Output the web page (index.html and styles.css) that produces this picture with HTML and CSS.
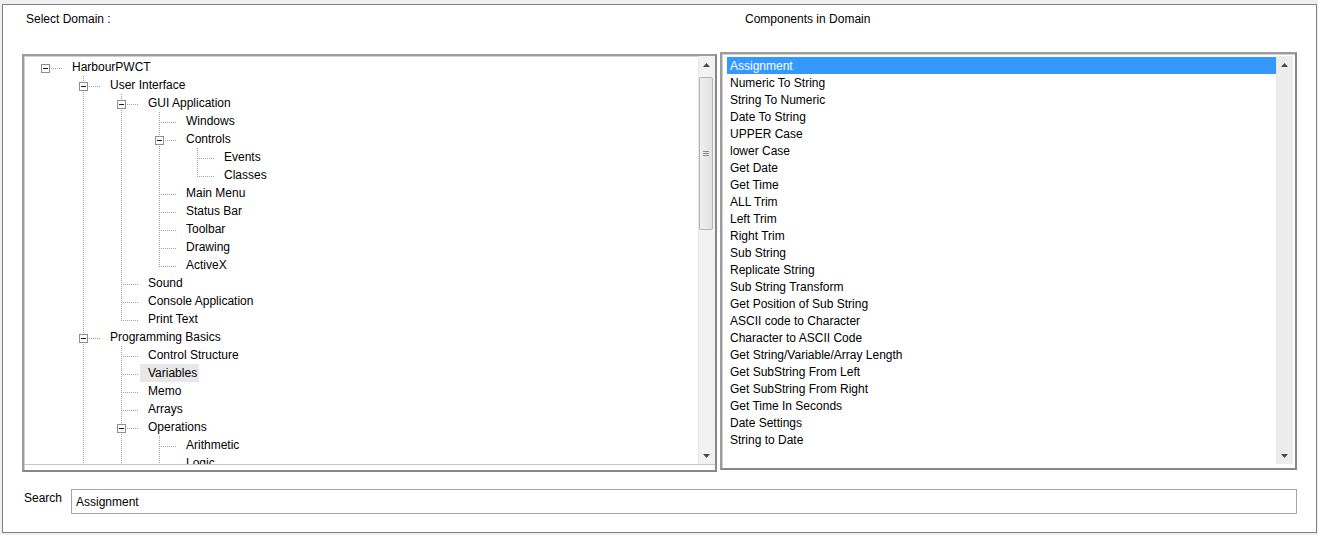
FILE: index.html
```html
<!DOCTYPE html>
<html>
<head>
<meta charset="utf-8">
<link rel="stylesheet" href="styles.css">
</head>
<body>
<div class="frame">
  <div class="header">
    <div class="hl">Select Domain :</div>
    <div class="hr">Components in Domain</div>
  </div>
  <div class="panels">
    <div class="panel left">
      <div class="tree-box">
        <div class="tree">
          <div class="row"><span class="c"><span class="x"></span></span><span class="l">HarbourPWCT</span></div>
          <div class="row"><span class="g"></span><span class="c t b"><span class="x"></span></span><span class="l">User Interface</span></div>
          <div class="row"><span class="g"></span><span class="g v"></span><span class="c t b"><span class="x"></span></span><span class="l">GUI Application</span></div>
          <div class="row"><span class="g"></span><span class="g v"></span><span class="g v"></span><span class="c t b"></span><span class="l">Windows</span></div>
          <div class="row"><span class="g"></span><span class="g v"></span><span class="g v"></span><span class="c t b"><span class="x"></span></span><span class="l">Controls</span></div>
          <div class="row"><span class="g"></span><span class="g v"></span><span class="g v"></span><span class="g v"></span><span class="c t b"></span><span class="l">Events</span></div>
          <div class="row"><span class="g"></span><span class="g v"></span><span class="g v"></span><span class="g v"></span><span class="c t"></span><span class="l">Classes</span></div>
          <div class="row"><span class="g"></span><span class="g v"></span><span class="g v"></span><span class="c t b"></span><span class="l">Main Menu</span></div>
          <div class="row"><span class="g"></span><span class="g v"></span><span class="g v"></span><span class="c t b"></span><span class="l">Status Bar</span></div>
          <div class="row"><span class="g"></span><span class="g v"></span><span class="g v"></span><span class="c t b"></span><span class="l">Toolbar</span></div>
          <div class="row"><span class="g"></span><span class="g v"></span><span class="g v"></span><span class="c t b"></span><span class="l">Drawing</span></div>
          <div class="row"><span class="g"></span><span class="g v"></span><span class="g v"></span><span class="c t"></span><span class="l">ActiveX</span></div>
          <div class="row"><span class="g"></span><span class="g v"></span><span class="c t b"></span><span class="l">Sound</span></div>
          <div class="row"><span class="g"></span><span class="g v"></span><span class="c t b"></span><span class="l">Console Application</span></div>
          <div class="row"><span class="g"></span><span class="g v"></span><span class="c t"></span><span class="l">Print Text</span></div>
          <div class="row"><span class="g"></span><span class="c t b"><span class="x"></span></span><span class="l">Programming Basics</span></div>
          <div class="row"><span class="g"></span><span class="g v"></span><span class="c t b"></span><span class="l">Control Structure</span></div>
          <div class="row"><span class="g"></span><span class="g v"></span><span class="c t b"></span><span class="l hover">Variables</span></div>
          <div class="row"><span class="g"></span><span class="g v"></span><span class="c t b"></span><span class="l">Memo</span></div>
          <div class="row"><span class="g"></span><span class="g v"></span><span class="c t b"></span><span class="l">Arrays</span></div>
          <div class="row"><span class="g"></span><span class="g v"></span><span class="c t b"><span class="x"></span></span><span class="l">Operations</span></div>
          <div class="row"><span class="g"></span><span class="g v"></span><span class="g v"></span><span class="c t b"></span><span class="l">Arithmetic</span></div>
          <div class="row"><span class="g"></span><span class="g v"></span><span class="g v"></span><span class="c t b"></span><span class="l">Logic</span></div>
        </div>
        <div class="sb">
          <div class="sb-btn"><svg width="7" height="4" viewBox="0 0 7 4"><path d="M3.5 0L7 4H0z" fill="#4a4a4a"/></svg></div>
          <div class="sb-track">
            <div class="thumb"><svg width="6" height="5" viewBox="0 0 6 5"><rect x="0" y="0" width="6" height="1" fill="#8a8a8a"/><rect x="0" y="2" width="6" height="1" fill="#8a8a8a"/><rect x="0" y="4" width="6" height="1" fill="#8a8a8a"/></svg></div>
          </div>
          <div class="sb-btn"><svg width="7" height="4" viewBox="0 0 7 4"><path d="M0 0H7L3.5 4z" fill="#4a4a4a"/></svg></div>
        </div>
      </div>
    </div>
    <div class="panel right">
      <div class="list">
        <div class="item sel">Assignment</div>
        <div class="item">Numeric To String</div>
        <div class="item">String To Numeric</div>
        <div class="item">Date To String</div>
        <div class="item">UPPER Case</div>
        <div class="item">lower Case</div>
        <div class="item">Get Date</div>
        <div class="item">Get Time</div>
        <div class="item">ALL Trim</div>
        <div class="item">Left Trim</div>
        <div class="item">Right Trim</div>
        <div class="item">Sub String</div>
        <div class="item">Replicate String</div>
        <div class="item">Sub String Transform</div>
        <div class="item">Get Position of Sub String</div>
        <div class="item">ASCII code to Character</div>
        <div class="item">Character to ASCII Code</div>
        <div class="item">Get String/Variable/Array Length</div>
        <div class="item">Get SubString From Left</div>
        <div class="item">Get SubString From Right</div>
        <div class="item">Get Time In Seconds</div>
        <div class="item">Date Settings</div>
        <div class="item">String to Date</div>
      </div>
      <div class="sb sb-plain">
        <div class="sb-btn"><svg width="7" height="4" viewBox="0 0 7 4"><path d="M3.5 0L7 4H0z" fill="#4a4a4a"/></svg></div>
        <div class="sb-track"></div>
        <div class="sb-btn"><svg width="7" height="4" viewBox="0 0 7 4"><path d="M0 0H7L3.5 4z" fill="#4a4a4a"/></svg></div>
      </div>
    </div>
  </div>
  <div class="search-row">
    <div class="slabel">Search</div>
    <input class="search" type="text" value="Assignment">
  </div>
</div>
</body>
</html>
```
FILE: styles.css
```css
html, body {
  margin: 0;
  padding: 0;
  background: #f0f0f0;
  height: 535px;
  overflow: hidden;
  font-family: "Liberation Sans", Arial, sans-serif;
  font-size: 12px;
  color: #000;
}

.frame {
  margin: 4px 0 0 2px;
  width: 1313px;
  height: 527px;
  border: 1px solid #7f7f7f;
  background: #fff;
}

.header {
  display: flex;
  height: 47px;
  box-sizing: border-box;
  padding: 7px 0 0 19px;
  line-height: 14px;
}

.hl {
  width: 698px;
  padding-left: 4px;
  box-sizing: border-box;
}

.hr {
  padding-left: 25px;
}

.panels {
  display: flex;
  align-items: flex-start;
  gap: 3px;
  padding-left: 19px;
}

.panel {
  box-sizing: border-box;
  height: 418px;
  border: 2px solid #a0a0a0;
  border-color: #9c9c9c #878787 #878787 #9c9c9c;
  box-shadow: inset 1px 1px 0 #d0d0d0;
  background: #fff;
}

.left {
  width: 695px;
  margin-top: 2px;
}

.tree-box {
  display: flex;
  height: 408px;
  border-bottom: 1px solid #c8c8c8;
}

.tree {
  flex: 1;
  overflow: hidden;
  padding: 2px 0 0 2px;
}

.row {
  display: flex;
  height: 18px;
}

.g, .c {
  flex: 0 0 38px;
  height: 18px;
  box-sizing: border-box;
}

.g.v {
  background: repeating-linear-gradient(to bottom, #a0a0a0 0 1px, transparent 1px 2px) 19px 0 / 1px 18px no-repeat;
}

.c {
  --h: repeating-linear-gradient(to right, #a0a0a0 0 1px, transparent 1px 2px);
  --vv: repeating-linear-gradient(to bottom, #a0a0a0 0 1px, transparent 1px 2px);
  background: var(--h) 19px 10px / 17px 1px no-repeat;
  padding-left: 15px;
}

.c.t {
  background: var(--h) 19px 10px / 17px 1px no-repeat, var(--vv) 19px 0 / 1px 11px no-repeat;
}

.c.b {
  background: var(--h) 19px 10px / 17px 1px no-repeat, var(--vv) 19px 10px / 1px 8px no-repeat;
}

.c.t.b {
  background: var(--h) 19px 10px / 17px 1px no-repeat, var(--vv) 19px 0 / 1px 18px no-repeat;
}

.x {
  display: block;
  width: 9px;
  height: 9px;
  margin-top: 6px;
  box-sizing: border-box;
  border: 1px solid #8e8e8e;
  background: #fff linear-gradient(#1a1a1a, #1a1a1a) center / 5px 1px no-repeat;
}

.l {
  padding: 0 2px 0 8px;
  line-height: 18px;
  white-space: nowrap;
}

.l.hover {
  background: #e8e8e8;
}

.sb {
  flex: 0 0 17px;
  width: 17px;
  display: flex;
  flex-direction: column;
  background: #f2f2f2;
  box-shadow: inset 1px 0 0 #e6e6e6;
}

.sb-btn {
  height: 17px;
  display: flex;
  align-items: center;
  justify-content: center;
}

.sb-btn svg {
  display: block;
}

.sb-track {
  flex: 1;
  padding-top: 4px;
}

.thumb {
  box-sizing: border-box;
  width: 14px;
  height: 153px;
  margin-left: 1px;
  border: 1px solid #b4b4b4;
  border-radius: 2px;
  background: linear-gradient(to right, #f0f0f0, #e2e2e2);
  display: flex;
  align-items: center;
  justify-content: center;
}

.thumb svg {
  display: block;
}

.right {
  width: 577px;
  display: flex;
  padding: 2px 2px 4px 5px;
}

.list {
  width: 549px;
  padding-top: 1px;
}

.item {
  box-sizing: border-box;
  height: 17px;
  padding: 1px 0 0 3px;
  line-height: 16px;
  white-space: nowrap;
}

.item.sel {
  background: #3399ff;
  color: #fff;
}

.sb-plain {
  background: #ececec;
}

.search-row {
  display: flex;
  align-items: flex-start;
  margin-top: 17px;
  padding-left: 21px;
}

.slabel {
  width: 47px;
  padding-top: 2px;
  line-height: 14px;
}

.search {
  box-sizing: border-box;
  width: 1226px;
  height: 25px;
  margin: 0;
  border: 1px solid #a5a5a5;
  padding: 0 4px;
  font-family: "Liberation Sans", Arial, sans-serif;
  font-size: 12px;
  color: #000;
  background: #fff;
  outline: none;
}
```
